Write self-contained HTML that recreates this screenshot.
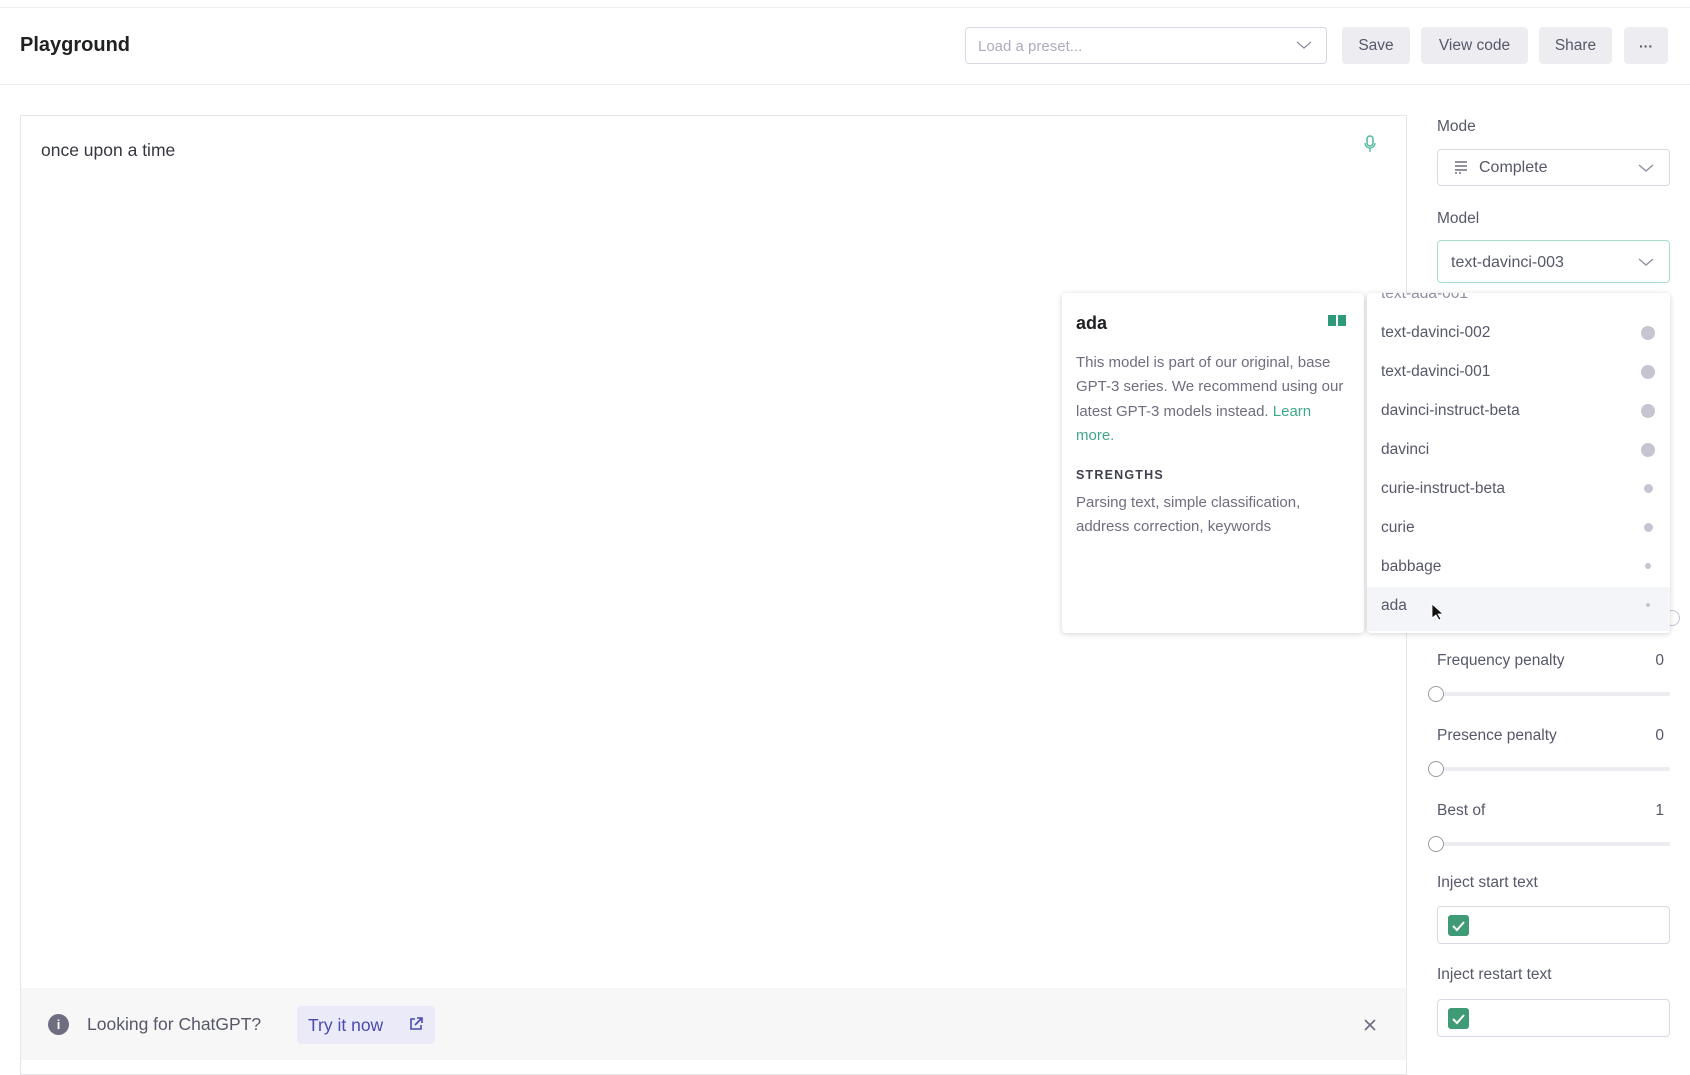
<!DOCTYPE html>
<html><head><meta charset="utf-8"><style>
*{box-sizing:border-box;margin:0;padding:0}
body{width:1690px;height:1060px;overflow:hidden;background:#fff;font-family:"Liberation Sans",sans-serif;color:#353740;position:relative}
.a{position:absolute}
.btn{position:absolute;top:27px;height:37px;background:#ececf1;border-radius:4px;font-size:15.5px;color:#565869;display:flex;align-items:center;justify-content:center}
.lbl{position:absolute;left:1437px;font-size:15.5px;color:#565869}
.val{position:absolute;left:1650px;width:14px;text-align:right;font-size:15.5px;color:#565869}
.track{position:absolute;left:1437px;width:233px;height:4px;background:#ececf1;border-radius:2px}
.knob{position:absolute;left:1428px;width:16px;height:16px;border-radius:50%;border:1.5px solid #9a9aa3;background:#fff}
.item{position:absolute;left:1381px;font-size:15.5px;color:#565869}
.dot{position:absolute;border-radius:50%;background:#c5c5d2}
.box{position:absolute;left:1437px;width:233px;height:38px;border:1px solid #d9d9e3;border-radius:4px}
.cb{position:absolute;left:10px;top:8px;width:21px;height:21px;background:#3f9a76;border-radius:3px}
</style></head><body>
<div class="a" style="left:0;top:7px;width:1690px;height:1px;background:#ececf1"></div>
<div class="a" style="left:20px;top:34px;font-size:20px;font-weight:bold;color:#202123">Playground</div>
<div class="a" style="left:965px;top:27px;width:362px;height:37px;border:1px solid #d9d9e3;border-radius:4px;font-size:15px;color:#acacbe;padding:10px 12px">Load a preset...</div>
<svg class="a" style="left:1296px;top:40px" width="16" height="10"><path d="M1 2l7 6 7-6" fill="none" stroke="#8e8ea0" stroke-width="1.3"/></svg>
<div class="btn" style="left:1342px;width:68px">Save</div>
<div class="btn" style="left:1421px;width:107px">View code</div>
<div class="btn" style="left:1539px;width:73px">Share</div>
<div class="btn" style="left:1624px;width:44px;font-size:14px;font-weight:bold">···</div>
<div class="a" style="left:0;top:84px;width:1690px;height:1px;background:#ececf1"></div>

<div class="a" style="left:20px;top:115px;width:1387px;height:960px;border:1px solid #e5e5ea"></div>
<div class="a" style="left:41px;top:140px;font-size:17.5px;color:#353740">once upon a time</div>
<svg class="a" style="left:1364px;top:135px" width="12" height="18"><rect x="3" y="1" width="6" height="10" rx="3" fill="none" stroke="#4fb89a" stroke-width="1.5"/><path d="M1 8a5 5 0 0 0 10 0M6 13v4" fill="none" stroke="#4fb89a" stroke-width="1.3"/></svg>
<div class="a" style="left:21px;top:988px;width:1385px;height:72px;background:#f7f7f8"></div>
<div class="a" style="left:48px;top:1014px;width:21px;height:21px;border-radius:50%;background:#6e6e80;color:#fff;font-size:13px;font-weight:bold;text-align:center;line-height:21px">i</div>
<div class="a" style="left:87px;top:1014px;font-size:17.5px;color:#565869">Looking for ChatGPT?</div>
<div class="a" style="left:297px;top:1006px;width:138px;height:38px;background:#ebeaf8;border-radius:4px;font-size:17.5px;color:#4a4ab0;padding:9px 0 0 11px">Try it now</div>
<svg class="a" style="left:408px;top:1016px" width="16" height="16"><path d="M7 3H3v10h10V9M9 2h5v5M14 2L7 9" fill="none" stroke="#4a4ab0" stroke-width="1.6"/></svg>
<svg class="a" style="left:1363px;top:1018px" width="14" height="14"><path d="M2 2l10 10M12 2L2 12" stroke="#6e6e80" stroke-width="1.7"/></svg>

<div class="lbl" style="top:118px">Mode</div>
<div class="a" style="left:1437px;top:149px;width:233px;height:37px;border:1px solid #d9d9e3;border-radius:4px"></div>
<svg class="a" style="left:1454px;top:160px" width="14" height="15"><path d="M1 2h12M1 6h12M1 10h12" stroke="#6e6e80" stroke-width="1.5"/><path d="M1 13h2M5 13h2" stroke="#6e6e80" stroke-width="1.5"/></svg>
<div class="a" style="left:1479px;top:159px;font-size:16px;color:#565869">Complete</div>
<svg class="a" style="left:1638px;top:163px" width="16" height="10"><path d="M1 2l7 6 7-6" fill="none" stroke="#8e8ea0" stroke-width="1.3"/></svg>
<div class="lbl" style="top:210px">Model</div>
<div class="a" style="left:1437px;top:240px;width:233px;height:43px;border:1px solid #a8dcc8;border-radius:4px"></div>
<div class="a" style="left:1451px;top:254px;font-size:16px;color:#565869">text-davinci-003</div>
<svg class="a" style="left:1638px;top:257px" width="16" height="10"><path d="M1 2l7 6 7-6" fill="none" stroke="#8e8ea0" stroke-width="1.3"/></svg>

<div class="lbl" style="top:652px">Frequency penalty</div><div class="val" style="top:652px">0</div>
<div class="track" style="top:692px"></div><div class="knob" style="top:686px"></div>
<div class="lbl" style="top:727px">Presence penalty</div><div class="val" style="top:727px">0</div>
<div class="track" style="top:767px"></div><div class="knob" style="top:761px"></div>
<div class="lbl" style="top:802px">Best of</div><div class="val" style="top:802px">1</div>
<div class="track" style="top:842px"></div><div class="knob" style="top:836px"></div>
<div class="lbl" style="top:874px">Inject start text</div>
<div class="box" style="top:906px"><div class="cb"><svg width="21" height="21"><path d="M5 11l4 4 7-8" fill="none" stroke="#fff" stroke-width="2"/></svg></div></div>
<div class="lbl" style="top:966px">Inject restart text</div>
<div class="box" style="top:999px"><div class="cb"><svg width="21" height="21"><path d="M5 11l4 4 7-8" fill="none" stroke="#fff" stroke-width="2"/></svg></div></div>
<div class="a" style="left:1664px;top:610px;width:16px;height:16px;border-radius:50%;border:1.5px solid #c5c5d2"></div>

<div class="a" style="left:1062px;top:293px;width:302px;height:340px;background:#fff;border-radius:4px;box-shadow:0 1px 6px rgba(0,0,0,.18)"></div>
<div class="a" style="left:1076px;top:313px;font-size:18px;font-weight:bold;color:#202123">ada</div>
<svg class="a" style="left:1327px;top:314px" width="20" height="13"><path d="M1 1h8v11H1zM11 1h8v11h-8z" fill="#2f9a79"/></svg>
<div class="a" style="left:1076px;top:351px;width:276px;font-size:15px;line-height:24.3px;color:#6e6e80">This model is part of our original, base GPT-3 series. We recommend using our latest GPT-3 models instead. <span style="color:#3fa88a">Learn more.</span></div>
<div class="a" style="left:1076px;top:468px;font-size:12.5px;font-weight:bold;letter-spacing:1.2px;color:#40414f">STRENGTHS</div>
<div class="a" style="left:1076px;top:491px;width:276px;font-size:15px;line-height:24.3px;color:#6e6e80">Parsing text, simple classification, address correction, keywords</div>

<div class="a" style="left:1367px;top:293px;width:303px;height:340px;background:#fff;border-radius:4px;box-shadow:0 1px 6px rgba(0,0,0,.18);overflow:hidden">
<div class="a" style="left:0;top:294px;width:303px;height:44px;background:#f3f5f8"></div>
<div class="a" style="left:14px;top:-8px;font-size:15.5px;color:#8e8ea0">text-ada-001</div>
</div>
<div class="item" style="top:324px">text-davinci-002</div><div class="dot" style="left:1641px;top:326px;width:14px;height:14px"></div>
<div class="item" style="top:363px">text-davinci-001</div><div class="dot" style="left:1641px;top:365px;width:14px;height:14px"></div>
<div class="item" style="top:402px">davinci-instruct-beta</div><div class="dot" style="left:1641px;top:404px;width:14px;height:14px"></div>
<div class="item" style="top:441px">davinci</div><div class="dot" style="left:1641px;top:443px;width:14px;height:14px"></div>
<div class="item" style="top:480px">curie-instruct-beta</div><div class="dot" style="left:1644px;top:484px;width:9px;height:9px"></div>
<div class="item" style="top:519px">curie</div><div class="dot" style="left:1644px;top:523px;width:9px;height:9px"></div>
<div class="item" style="top:558px">babbage</div><div class="dot" style="left:1645px;top:563px;width:6px;height:6px"></div>
<div class="item" style="top:597px">ada</div><div class="dot" style="left:1646px;top:603px;width:4px;height:4px"></div>
<svg class="a" style="left:1431px;top:603px" width="12" height="18"><path d="M1 1v14l4-3 3 5 2-1-3-5h5z" fill="#111" stroke="#fff" stroke-width=".8"/></svg>
</body></html>
